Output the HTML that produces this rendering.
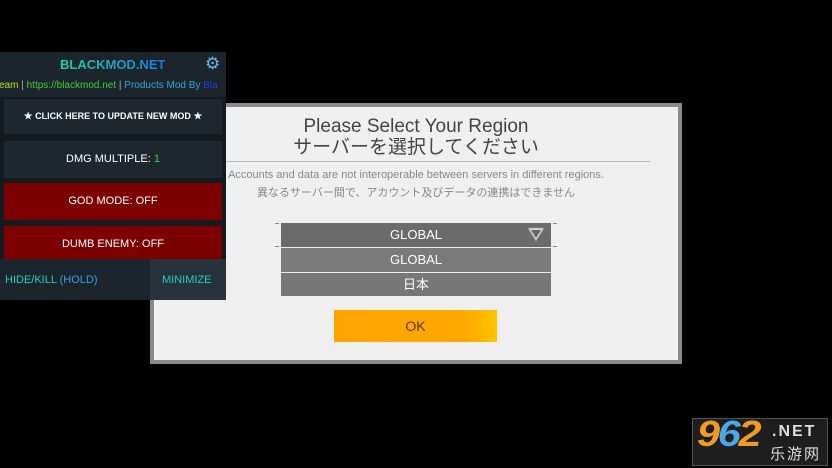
<!DOCTYPE html>
<html><head><meta charset="utf-8"><style>
body{margin:0;width:832px;height:468px;background:#000;position:relative;overflow:hidden;font-family:"Liberation Sans","Noto Sans CJK JP",sans-serif}
.a{position:absolute}
.dlg{left:150px;top:103px;width:532px;height:261px;background:#8a8a8a}
.in{left:154px;top:107px;width:524px;height:253px;background:#efefef}
.c{text-align:center}
.dd{left:281px;width:270px;color:#fff;font-size:13px;text-align:center;line-height:24px}
.p{background:#1c252c}
.btn{left:4px;width:218px;color:#fff;font-size:11px;text-align:center}
.red{background:#7c0000}
</style></head><body>
<div class="a dlg"></div><div class="a in"></div>
<div class="a c" style="left:154px;top:116px;width:524px;font-size:19px;color:#444;line-height:21px">Please Select Your Region<br>サーバーを選択してください</div>
<div class="a" style="left:222px;top:161px;width:428px;height:1px;background:#bbb"></div>
<div class="a c" style="left:154px;top:166px;width:524px;font-size:11px;color:#888;line-height:18px">Accounts and data are not interoperable between servers in different regions.<br>異なるサーバー間で、アカウント及びデータの連携はできません</div>
<div class="a dd" style="top:223px;height:24px;background:#6b6b6b">GLOBAL</div>
<svg class="a" style="left:527px;top:227px" width="18" height="16"><polygon points="1,1 17,1 9,14" fill="#ddd" stroke="#999"/><polygon points="4,3 14,3 9,11" fill="#666"/></svg>
<div class="a dd" style="top:248px;height:24px;background:#7a7a7a">GLOBAL</div>
<div class="a dd" style="top:273px;height:23px;background:#777">日本</div>
<div class="a" style="left:275px;top:223px;width:4px;height:1px;background:#888"></div>
<div class="a" style="left:553px;top:223px;width:4px;height:1px;background:#888"></div>
<div class="a" style="left:275px;top:246px;width:4px;height:1px;background:#888"></div>
<div class="a" style="left:553px;top:246px;width:4px;height:1px;background:#888"></div>
<div class="a c" style="left:334px;top:310px;width:163px;height:32px;line-height:32px;background:linear-gradient(90deg,#ffa300,#ffa800 80%,#ffc400);color:#5a3a00;font-size:14px">OK</div>

<div class="a p" style="left:0;top:52px;width:226px;height:248px"></div>
<div class="a" style="left:60px;top:57px;font-size:13px;font-weight:bold;background:linear-gradient(90deg,#1ed6a0,#1a7ae8);-webkit-background-clip:text;color:transparent">BLACKMOD.NET</div>
<div class="a" style="left:205px;top:54px;font-size:17px;color:#6bb8e8">⚙</div>
<div class="a" style="left:-6px;top:80px;font-size:10px;white-space:nowrap;width:232px;overflow:hidden"><span style="color:#b8e020">Team</span> <span style="color:#aaa">|</span> <span style="color:#3ed02e">https://blackmod.net</span> <span style="color:#aaa">|</span> <span style="color:#2aa8e0">Products Mod By </span><span style="color:#1a40e0">Bla</span></div>
<div class="a" style="left:0;top:97px;width:226px;height:162px;background:#151a1e"></div>
<div class="a btn" style="top:99px;height:35px;line-height:35px;background:#1f272e;font-size:9px;font-weight:bold">★ CLICK HERE TO UPDATE NEW MOD ★</div>
<div class="a btn" style="top:141px;height:37px;line-height:37px;background:#1f272e">DMG MULTIPLE: <span style="color:#4c4">1</span></div>
<div class="a btn red" style="top:183px;height:37px;line-height:37px">GOD MODE: OFF</div>
<div class="a btn red" style="top:226px;height:33px;line-height:37px">DUMB ENEMY: OFF</div>
<div class="a p" style="left:0;top:259px;width:150px;height:41px"></div>
<div class="a" style="left:150px;top:259px;width:76px;height:41px;background:#27323a"></div>
<div class="a" style="left:5px;top:274px;font-size:11px;color:#22cfc0">HIDE/KILL <span style="color:#3b9fe0">(HOLD)</span></div>
<div class="a" style="left:162px;top:274px;font-size:11px;color:#22cfc0">MINIMIZE</div>

<div class="a" style="left:692px;top:418px;width:136px;height:48px;background:#1e1e1e;border:1px solid #555;box-sizing:border-box"></div>
<div class="a" style="left:697px;top:413px;font-size:36px;font-weight:bold;font-style:italic;color:#f39a20;letter-spacing:-2px;transform:scaleX(1.15);transform-origin:left">9<span style="color:#4aa8e8">6</span>2</div>
<div class="a" style="left:772px;top:423px;font-size:16px;font-weight:bold;color:#ddd;letter-spacing:2px">.NET</div>
<div class="a" style="left:770px;top:443px;font-size:15px;color:#ddd;letter-spacing:2px">乐游网</div>
</body></html>
